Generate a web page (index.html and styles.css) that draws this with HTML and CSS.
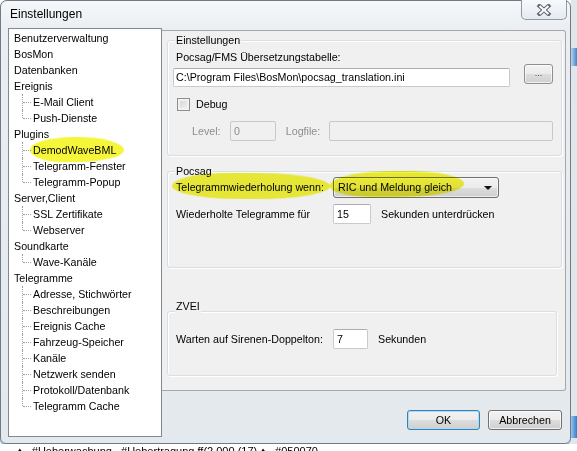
FILE: index.html
```html
<!DOCTYPE html>
<html lang="de">
<head>
<meta charset="utf-8">
<title>Einstellungen</title>
<link rel="stylesheet" href="styles.css">
</head>
<body>
<div class="screen">
  <div class="top">
    <div class="window">
      <div class="titlebar">
        <span class="title">Einstellungen</span>
        <div class="close">
          <svg width="16" height="12" viewBox="0 0 16 12">
            <path d="M3.5 2 L12.5 10 M12.5 2 L3.5 10" stroke="#5f6670" stroke-width="4" stroke-linecap="square" fill="none"/>
            <path d="M3.5 2 L12.5 10 M12.5 2 L3.5 10" stroke="#ffffff" stroke-width="2" stroke-linecap="butt" fill="none"/>
          </svg>
        </div>
      </div>
      <div class="client">
        <div class="tree">
          <div class="node">Benutzerverwaltung</div>
          <div class="node">BosMon</div>
          <div class="node">Datenbanken</div>
          <div class="node">Ereignis</div>
          <div class="node child">E-Mail Client</div>
          <div class="node child last">Push-Dienste</div>
          <div class="node">Plugins</div>
          <div class="node child"><span class="mark mark-tree"></span><span class="txt">DemodWaveBML</span></div>
          <div class="node child">Telegramm-Fenster</div>
          <div class="node child last">Telegramm-Popup</div>
          <div class="node">Server,Client</div>
          <div class="node child">SSL Zertifikate</div>
          <div class="node child last">Webserver</div>
          <div class="node">Soundkarte</div>
          <div class="node child last">Wave-Kanäle</div>
          <div class="node">Telegramme</div>
          <div class="node child">Adresse, Stichwörter</div>
          <div class="node child">Beschreibungen</div>
          <div class="node child">Ereignis Cache</div>
          <div class="node child">Fahrzeug-Speicher</div>
          <div class="node child">Kanäle</div>
          <div class="node child">Netzwerk senden</div>
          <div class="node child">Protokoll/Datenbank</div>
          <div class="node child last">Telegramm Cache</div>
        </div>
        <div class="main">
          <div class="panel">
            <div class="group g1">
              <div class="legend">Einstellungen</div>
              <div class="label l-table">Pocsag/FMS Übersetzungstabelle:</div>
              <div class="row file-row">
                <div class="textbox file">C:\Program Files\BosMon\pocsag_translation.ini</div>
                <div class="btn dots">...</div>
              </div>
              <div class="row debug-row">
                <div class="checkbox"></div>
                <span class="label">Debug</span>
              </div>
              <div class="row level-row">
                <span class="label disabled lvl">Level:</span>
                <div class="textbox off level">0</div>
                <span class="label disabled logl">Logfile:</span>
                <div class="textbox off logfile"></div>
              </div>
            </div>
            <div class="group g2">
              <div class="legend">Pocsag</div>
              <div class="row combo-row">
                <span class="mark mark-label"></span>
                <span class="mark mark-combo"></span>
                <span class="label fixed">Telegrammwiederholung wenn:</span>
                <div class="combo">
                  <span class="combo-text">RIC und Meldung gleich</span>
                  <span class="arrow"></span>
                </div>
              </div>
              <div class="row rep-row">
                <span class="label fixed">Wiederholte Telegramme für</span>
                <div class="textbox num15">15</div>
                <span class="label after">Sekunden unterdrücken</span>
              </div>
            </div>
            <div class="group g3">
              <div class="legend zvei">ZVEI</div>
              <div class="row zvei-row">
                <span class="label fixed">Warten auf Sirenen-Doppelton:</span>
                <div class="textbox num7">7</div>
                <span class="label after">Sekunden</span>
              </div>
            </div>
          </div>
          <div class="buttons">
            <div class="btn ok">OK</div>
            <div class="btn cancel">Abbrechen</div>
          </div>
        </div>
      </div>
    </div>
    <div class="rightstrip">
      <div class="rs-a"></div>
      <div class="rs-blue"></div>
      <div class="rs-b"></div>
      <div class="rs-blue2"></div>
    </div>
  </div>
  <div class="bottomstrip"><span>&#9830;&nbsp;&nbsp;&nbsp;#Ueberwachung&nbsp;&nbsp;&nbsp;#Uebertragung ff(2.000 (17) &#9830;&nbsp;&nbsp;&nbsp;#050070</span></div>
</div>
</body>
</html>
```
FILE: styles.css
```css
* { box-sizing: border-box; }
html, body { margin: 0; padding: 0; }
body {
  width: 577px;
  height: 451px;
  overflow: hidden;
  background: #ffffff;
  font-family: "Liberation Sans", Arial, sans-serif;
  font-size: 10.7px;
  color: #000;
}
.screen { display: flex; flex-direction: column; width: 577px; height: 451px; }
.top { display: flex; height: 444px; }

.window {
  width: 571px;
  height: 444px;
  border: 1px solid #6e7a87;
  border-radius: 7px 7px 6px 6px;
  background: linear-gradient(180deg, #f6f8fa 0px, #eaeef2 28px, #e4e9ee 100%);
  box-shadow: 0 1px 2px rgba(40, 120, 210, 0.85);
  display: flex;
  flex-direction: column;
}
.titlebar {
  height: 27px;
  display: flex;
  justify-content: space-between;
  align-items: flex-start;
  padding-left: 9px;
  padding-right: 3px;
}
.title {
  font-size: 12px;
  line-height: 15px;
  padding-top: 6px;
  color: #000;
}
.close {
  width: 46px;
  height: 20px;
  margin-top: -1px;
  border: 1px solid #8d99a6;
  border-top: none;
  border-radius: 0 0 5px 5px;
  background: linear-gradient(180deg, #f7f9fb, #e6ebf0);
  display: flex;
  align-items: center;
  justify-content: center;
  padding-top: 1px;
}

.client {
  display: flex;
  height: 409px;
  margin: 0 3px 0 7px;
}
.tree {
  width: 154px;
  height: 409px;
  background: #ffffff;
  border: 1px solid #828790;
  padding-top: 1px;
}
.node {
  height: 16px;
  line-height: 16px;
  padding-left: 5px;
  white-space: nowrap;
  position: relative;
}
.node.child { padding-left: 24px; }
.node.child::before {
  content: "";
  position: absolute;
  left: 13px;
  top: 0;
  height: 16px;
  border-left: 1px dotted #a0a0a0;
}
.node.child.last::before { height: 8px; }
.node.child::after {
  content: "";
  position: absolute;
  left: 14px;
  top: 8px;
  width: 8px;
  border-top: 1px dotted #a0a0a0;
}
.txt { position: relative; }

.mark {
  position: absolute;
  background: #f5f53a;
  mix-blend-mode: multiply;
  filter: blur(0.6px);
  pointer-events: none;
}
.mark-tree {
  left: 21px;
  top: -5px;
  width: 94px;
  height: 25px;
  border-radius: 45% 55% 50% 40% / 50% 60% 45% 55%;
  transform: rotate(-1deg);
}
.mark-label {
  left: -4px;
  top: -4px;
  width: 158px;
  height: 26px;
  border-radius: 40% 45% 50% 40% / 55% 50% 55% 50%;
  transform: rotate(0.5deg);
}
.mark-combo {
  left: 154px;
  top: -6px;
  width: 134px;
  height: 26px;
  border-radius: 45% 50% 45% 40% / 55% 55% 50% 45%;
  transform: rotate(-0.8deg);
}

.main {
  width: 404px;
  display: flex;
  flex-direction: column;
}
.panel {
  height: 361px;
  margin-top: 2px;
  border-top: 1px solid #a7a7a7;
  border-right: 1px solid #a7a7a7;
  border-bottom: 1px solid #a7a7a7;
  border-radius: 0 3px 3px 0;
  background: #f0f0f0;
  padding-left: 5px;
  padding-right: 3px;
}
.group {
  border: 1px solid #d5dfe5;
  border-radius: 3px;
  box-shadow: inset 1px 1px 0 #ffffff, 1px 1px 0 #ffffff;
  padding: 0 8px;
}
.g1 { margin-top: 9px; height: 116px; }
.g2 { margin-top: 15px; height: 97px; }
.g3 { margin-top: 43px; height: 65px; margin-right: 5px; }

.legend {
  width: fit-content;
  line-height: 13px;
  margin-top: -7px;
  margin-left: -1px;
  padding: 0 1px;
  background: #f0f0f0;
}
.legend.zvei { margin-top: -12px; }

.label { line-height: 13px; white-space: nowrap; }
.l-table { margin-top: 4px; }
.disabled { color: #8d8d8d; }
.fixed { width: 157px; }
.after { margin-left: 10px; }

.row { display: flex; align-items: center; position: relative; }

.textbox {
  height: 20px;
  border: 1px solid #c6cad1;
  border-top-color: #abadb3;
  border-radius: 2px;
  background: #ffffff;
  padding: 0 3px;
  line-height: 18px;
  white-space: nowrap;
  overflow: hidden;
}
.textbox.off {
  background: #f0f0f0;
  border-color: #c9c9c9;
  color: #8d8d8d;
}

.file-row { align-items: flex-start; }
.file {
  width: 337px;
  height: 19px;
  line-height: 17px;
  margin-top: 4px;
  margin-left: -3px;
  padding-left: 2px;
}
.btn {
  height: 20px;
  border: 1px solid #707070;
  border-radius: 3px;
  background: linear-gradient(180deg, #f2f2f2 0%, #ebebeb 50%, #dddddd 51%, #cfcfcf 100%);
  display: flex;
  align-items: center;
  justify-content: center;
  box-shadow: inset 0 0 0 1px rgba(255, 255, 255, 0.7);
}
.dots {
  width: 29px;
  margin-left: 14px;
  border-color: #8e8e8e;
  font-size: 9px;
  color: #444;
  padding-bottom: 3px;
}

.debug-row { margin-top: 11px; height: 13px; }
.checkbox {
  width: 13px;
  height: 13px;
  margin-left: 1px;
  margin-right: 6px;
  border: 1px solid #8f8f8f;
  background: linear-gradient(135deg, #d0d0d0, #f7f7f7);
  box-shadow: inset 0 0 0 2px #f1f1f1;
}

.level-row { margin-top: 10px; height: 20px; }
.lvl { margin-left: 16px; width: 38px; }
.level { width: 46px; }
.logl { margin-left: 10px; width: 43px; }
.logfile { width: 225px; }

.combo-row { margin-top: -1px; height: 21px; }
.combo {
  width: 166px;
  height: 21px;
  border: 1px solid #707070;
  border-radius: 3px;
  background: linear-gradient(180deg, #f2f2f2 0%, #ebebeb 50%, #dddddd 51%, #cfcfcf 100%);
  box-shadow: inset 0 0 0 1px rgba(255, 255, 255, 0.6);
  display: flex;
  align-items: center;
  justify-content: space-between;
  padding: 0 4px 0 4px;
}
.combo-text { line-height: 13px; }
.arrow {
  width: 0;
  height: 0;
  border-left: 4px solid transparent;
  border-right: 4px solid transparent;
  border-top: 4px solid #111;
  margin-right: 2px;
}

.rep-row { margin-top: 6px; height: 20px; }
.num15 { width: 38px; }

.zvei-row { margin-top: 16px; height: 20px; }
.num7 { width: 35px; }

.buttons {
  display: flex;
  justify-content: flex-end;
  gap: 8px;
  margin-top: 19px;
  padding-right: 4px;
}
.ok {
  width: 73px;
  border-color: #3c7fb1;
  box-shadow: inset 0 0 0 1px #a8dcf6;
}
.cancel { width: 74px; }

.rightstrip {
  flex: 1;
  display: flex;
  flex-direction: column;
  background: #e2e6ea;
}
.rs-a { height: 48px; }
.rs-blue { height: 18px; background: linear-gradient(90deg, #bcd3ea, #3f86cf); }
.rs-b { height: 350px; }
.rs-blue2 { height: 22px; background: linear-gradient(90deg, #9cc3e8, #2f7fd0); }

.bottomstrip {
  height: 7px;
  overflow: hidden;
  background: #ffffff;
  padding-left: 17px;
}
.bottomstrip span {
  display: block;
  font-size: 11px;
  line-height: 11px;
  margin-top: 2px;
  white-space: nowrap;
}
```
